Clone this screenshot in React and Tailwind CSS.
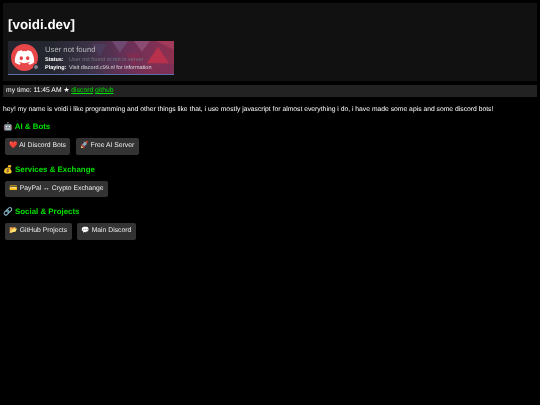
import React from 'react';
import { FaDiscord } from 'react-icons/fa';

const sections = [
    { icon: '🤖', title: 'AI & Bots', links: [{ icon: '❤️', label: 'AI Discord Bots' }, { icon: '🚀', label: 'Free AI Server' }] },
    { icon: '💰', title: 'Services & Exchange', links: [{ icon: '💳', label: 'PayPal ↔ Crypto Exchange' }] },
    { icon: '🔗', title: 'Social & Projects', links: [{ icon: '📂', label: 'GitHub Projects' }, { icon: '💬', label: 'Main Discord' }] },
];

function Triangles() {
    return (
        <svg className="absolute inset-0 w-full h-full" viewBox="0 0 166 34" preserveAspectRatio="none">
            <defs>
                <linearGradient id="banner" x1="0" x2="1" y1="0" y2="0">
                    <stop offset="0.25" stopColor="#23262e" />
                    <stop offset="0.5" stopColor="#3d3248" />
                    <stop offset="0.72" stopColor="#6b3058" />
                    <stop offset="1" stopColor="#8f3050" />
                </linearGradient>
            </defs>
            <rect width="166" height="34" fill="url(#banner)" />
            <polygon points="150,6 161,23 139,23" fill="#b8304c" />
            <polygon points="126,0 142,0 134,11" fill="#8a4a72" />
            <polygon points="104,0 120,0 112,12" fill="#6e4a70" />
            <polygon points="118,13 134,13 126,27" fill="#7e2c52" />
            <polygon points="84,3 99,3 92,16" fill="#4b3c5c" />
            <polygon points="148,0 166,0 166,9" fill="#a23a5c" />
            <polygon points="98,16 112,16 105,28" fill="#553557" />
            <polygon points="154,24 166,24 166,34 146,34" fill="#7e2f56" />
        </svg>
    );
}

function Banner() {
    return (
        <div className="relative w-[166px] h-[34px] overflow-hidden border-b border-[#5a6ea8] bg-[#23262e]">
            <Triangles />
            <div className="relative flex items-center h-full pl-[3px]">
                <div className="relative w-[27px] h-[27px] rounded-full bg-[#e8474a] flex items-center justify-center shrink-0">
                    <FaDiscord className="text-white text-[21px]" />
                    <span className="absolute right-[-1px] bottom-[1px] w-[6px] h-[6px] rounded-full bg-[#80848e] border border-[#23262e]" />
                </div>
                <div className="ml-[7px] flex flex-col">
                    <div className="text-[7.7px] leading-[11px] text-[#b9bbbe]">User not found</div>
                    <div className="mt-[1px] flex text-[5.5px] leading-[8px]">
                        <span className="w-[24px] font-bold text-white">Status:</span>
                        <span className="text-[#72767d] whitespace-nowrap">User not found or not in server</span>
                    </div>
                    <div className="flex text-[5.5px] leading-[8px]">
                        <span className="w-[24px] font-bold text-white">Playing:</span>
                        <span className="text-[#dcddde] whitespace-nowrap">Visit discord.c99.nl for information</span>
                    </div>
                </div>
            </div>
        </div>
    );
}

export default function App() {
    return (
        <div className="min-h-[405px] bg-black">
            <div className="text-white font-['Liberation_Sans',Arial,sans-serif] antialiased [text-rendering:geometricPrecision] [filter:blur(0.25px)] p-[3px] text-[6.77px]">
                <div className="bg-[#111111] h-[78px] px-[5px] pt-[14px]">
                    <h1 className="text-[13.4px] leading-[16px] font-bold">[voidi.dev]</h1>
                    <div className="mt-[8px]">
                        <Banner />
                    </div>
                </div>
                <div className="bg-[#222222] h-[12px] mt-[4px] px-[3px] leading-[12px]">
                    my time: 11:45 AM ★ <a href="#" className="text-[#00e000] underline">discord</a> <a href="#" className="text-[#00e000] underline">github</a>
                </div>
                <p className="mt-[8px] leading-[10px]">hey! my name is voidi i like programming and other things like that, i use mostly javascript for almost everything i do, i have made some apis and some discord bots!</p>
                <div className="mt-[7px] flex flex-col gap-[10px]">
                    {sections.map((section) => (
                        <section key={section.title}>
                            <h2 className="text-[7.9px] leading-[10px] font-bold text-[#00e000]">
                                <span>{section.icon}</span> {section.title}
                            </h2>
                            <div className="flex gap-[5.5px] mt-[6px] pl-[2px]">
                                {section.links.map((link) => (
                                    <a key={link.label} href="#" className="bg-[#333333] rounded-[2px] h-[16.5px] px-[4.4px] leading-[16.5px] text-[#eeeeee]">
                                        {link.icon} {link.label}
                                    </a>
                                ))}
                            </div>
                        </section>
                    ))}
                </div>
            </div>
        </div>
    );
}
